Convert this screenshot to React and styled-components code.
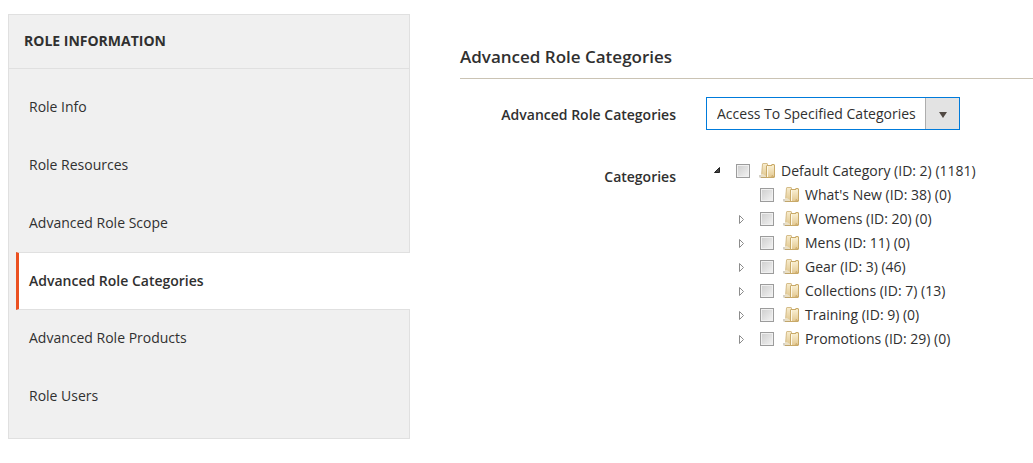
import React, { useState } from 'react';
import styled, { createGlobalStyle } from 'styled-components';

const GlobalStyle = createGlobalStyle`
    *{
    box-sizing: border-box;
    }
    body{
    margin: 0;
    background: #fff;
    color: #303030;
    font-family: 'Open Sans', 'Noto Sans', sans-serif;
    font-size: 14px;
    line-height: 20px;
    }
    ul{
    margin: 0;
    padding: 0;
    list-style: none;
    }
`;

const StyledPage = styled.div`
    display: grid;
    grid-template-columns: minmax(0, 134fr) minmax(0, 191fr);
    column-gap: 50px;
    align-items: start;
    padding: 14px 0 24px 8px;
`;

const StyledTabs = styled.nav`
    background: #f0f0f0;
    border: 1px solid #e0e0e0;
    padding-bottom: 13px;
`;

const StyledTabsTitle = styled.h2`
    margin: 0 0 9px;
    padding: 16px 15px 17px;
    border-bottom: 1px solid #e0e0e0;
    font-size: 14px;
    font-weight: 700;
    line-height: 20px;
    text-transform: uppercase;
`;

const StyledTabItem = styled.li`
    margin: 0 -1px 0 7px;
`;

const StyledTabLink = styled.a`
    display: block;
    margin-bottom: ${({ $active }) => ($active ? '-1px' : '0')};
    padding: 18px 10px;
    border: 1px solid ${({ $active }) => ($active ? '#e0e0e0' : 'transparent')};
    border-right: 0;
    border-left: 3px solid ${({ $active }) => ($active ? '#eb5020' : 'transparent')};
    background: ${({ $active }) => ($active ? '#fff' : 'transparent')};
    color: #303030;
    font-weight: ${({ $active }) => ($active ? 600 : 400)};
    text-decoration: none;
`;

const StyledMain = styled.main`
    padding-top: 31px;
`;

const StyledSectionTitle = styled.h1`
    margin: 0 0 18px;
    padding-bottom: 9px;
    border-bottom: 1px solid #cac3b4;
    font-size: 17px;
    font-weight: 600;
    line-height: 24px;
`;

const StyledField = styled.div`
    display: grid;
    grid-template-columns: minmax(0, 216fr) minmax(0, 327fr);
    column-gap: 30px;
    margin-bottom: 29px;
`;

const StyledLabel = styled.label`
    padding-top: 8px;
    font-weight: 600;
    text-align: right;
`;

const StyledSelectBox = styled.div`
    position: relative;
    justify-self: start;
    display: flex;
    svg{
    position: absolute;
    top: 1px;
    right: 1px;
    pointer-events: none;
    }
`;

const StyledSelect = styled.select`
    appearance: none;
    height: 33px;
    padding: 0 43px 0 10px;
    border: 1px solid #007bdb;
    border-radius: 0;
    background: #fff;
    color: #303030;
    font: inherit;
    outline: none;
`;

const StyledBranch = styled.ul`
    ul{
    padding-left: 24px;
    }
`;

const StyledNode = styled.div`
    display: flex;
    align-items: center;
    height: 24px;
`;

const StyledToggle = styled.button`
    flex: none;
    width: 16px;
    height: 16px;
    margin: 0 10px 0 4px;
    padding: 0;
    border: 0;
    background: none;
    visibility: ${({ $hidden }) => ($hidden ? 'hidden' : 'visible')};
    svg{
    display: block;
    }
`;

const StyledNodeLabel = styled.label`
    display: flex;
    align-items: center;
    white-space: nowrap;
    svg{
    margin: 0 6px 0 9px;
    }
`;

const StyledCheckbox = styled.input`
    appearance: none;
    width: 14px;
    height: 14px;
    margin: 0;
    border: 1px solid #9c9c9c;
    background: linear-gradient(135deg, #cdcdcd, #f3f3f3);
    box-shadow: inset 0 0 0 1px #f0f0f0;
    &:checked{
    background: #606060;
    }
`;

const tabs = [
    'Role Info',
    'Role Resources',
    'Advanced Role Scope',
    'Advanced Role Categories',
    'Advanced Role Products',
    'Role Users',
];

const children = [
    { id: 38, name: "What's New", count: 0, leaf: true },
    { id: 20, name: 'Womens', count: 0 },
    { id: 11, name: 'Mens', count: 0 },
    { id: 3, name: 'Gear', count: 46 },
    { id: 7, name: 'Collections', count: 13 },
    { id: 9, name: 'Training', count: 0 },
    { id: 29, name: 'Promotions', count: 0 },
];

const FolderIcon = () => (
    <svg width="16" height="16" viewBox="0 0 16 16" aria-hidden="true">
        <defs>
            <linearGradient id="folderBack" x1="0" y1="0" x2="0" y2="1">
                <stop offset="0" stopColor="#f7ebcb" />
                <stop offset="1" stopColor="#e0c68e" />
            </linearGradient>
            <linearGradient id="folderFront" x1="0" y1="0" x2="0" y2="1">
                <stop offset="0" stopColor="#f9eecf" />
                <stop offset="1" stopColor="#e3c993" />
            </linearGradient>
        </defs>
        {/* shadow */}
        <path d="M0 12h3v3H1l-1-1z" fill="#d6d2c8" />
        {/* back folder */}
        <path d="M3 1l1-1h4l1 1v14H3l-1-2z" fill="#d5bd8a" />
        <path d="M4 1h4v13H3z" fill="url(#folderBack)" />
        <path d="M2 11h2l3 2v1H2z" fill="#eadfc4" />
        <path d="M2 14h6v1H2z" fill="#c0a56c" />
        {/* front folder */}
        <path d="M7 3l1-1h4l1-1h2l1 1v12l-1 1H7z" fill="#c8a968" />
        <path d="M8 3h7v11H8z" fill="url(#folderFront)" />
        <path d="M8 3h1v11H8z" fill="#fdf8e8" />
        <path d="M13 2h2v1h-2z" fill="#f4e4ba" />
        <path d="M13 12h1v1h1v1h-3z" fill="#d3b375" />
    </svg>
);

const ArrowIcon = ({ open }) => (
    <svg width="16" height="16" viewBox="0 0 16 16" aria-hidden="true">
        {open ? (
            <path d="M9.500 4.500v5h-5z" fill="#444" stroke="#222" />
        ) : (
            <path d="M5.500 4.500v8l4-4z" fill="#fff" stroke="#8c8c8c" />
        )}
    </svg>
);

const CategoryNode = ({ category, open, onToggle }) => (
    <StyledNode>
        <StyledToggle
            type="button"
            aria-label={`Toggle ${category.name}`}
            aria-expanded={!!open}
            $hidden={category.leaf}
            onClick={onToggle}
        >
            <ArrowIcon open={open} />
        </StyledToggle>
        <StyledNodeLabel>
            <StyledCheckbox type="checkbox" name="category" value={category.id} />
            <FolderIcon />
            {`${category.name} (ID: ${category.id}) (${category.count})`}
        </StyledNodeLabel>
    </StyledNode>
);

const App = () => {
    const [activeTab, setActiveTab] = useState('Advanced Role Categories');
    const [open, setOpen] = useState(true);

    return (
        <>
            <GlobalStyle />
            <StyledPage>
                <StyledTabs>
                    <StyledTabsTitle>Role Information</StyledTabsTitle>
                    <ul>
                        {tabs.map((tab) => (
                            <StyledTabItem key={tab}>
                                <StyledTabLink href="#" $active={tab === activeTab} onClick={() => setActiveTab(tab)}>
                                    {tab}
                                </StyledTabLink>
                            </StyledTabItem>
                        ))}
                    </ul>
                </StyledTabs>
                <StyledMain>
                    <StyledSectionTitle>Advanced Role Categories</StyledSectionTitle>
                    <StyledField>
                        <StyledLabel htmlFor="access">Advanced Role Categories</StyledLabel>
                        <StyledSelectBox>
                            <StyledSelect id="access" defaultValue="specified">
                                <option value="specified">Access To Specified Categories</option>
                                <option value="all">Access To All Categories</option>
                            </StyledSelect>
                            <svg width="34" height="31" viewBox="0 0 34 31" aria-hidden="true">
                                <path d="M0 0h34v31H0z" fill="#e3e3e3" />
                                <path d="M.5 0v31" stroke="#adadad" />
                                <path d="M14 14h8l-4 6z" fill="#514943" />
                            </svg>
                        </StyledSelectBox>
                    </StyledField>
                    <StyledField>
                        <StyledLabel as="div" id="categories">Categories</StyledLabel>
                        <StyledBranch aria-labelledby="categories">
                            <li>
                                <CategoryNode
                                    category={{ id: 2, name: 'Default Category', count: 1181 }}
                                    open={open}
                                    onToggle={() => setOpen(!open)}
                                />
                                {open && (
                                    <ul>
                                        {children.map((category) => (
                                            <li key={category.id}>
                                                <CategoryNode category={category} />
                                            </li>
                                        ))}
                                    </ul>
                                )}
                            </li>
                        </StyledBranch>
                    </StyledField>
                </StyledMain>
            </StyledPage>
        </>
    );
};

export default App;
